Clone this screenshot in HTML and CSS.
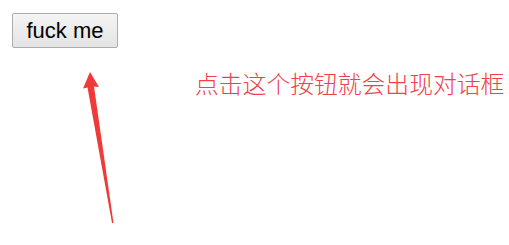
FILE: index.html
```html
<!DOCTYPE html>
<html lang="zh-CN">
<head>
<meta charset="utf-8">
<title>button</title>
<link rel="stylesheet" href="styles.css">
</head>
<body>
<div class="page">
  <button class="btn" type="button">fuck me</button>
  <p class="hint">点击这个按钮就会出现对话框</p>
</div>
<svg class="arrow" width="509" height="245" viewBox="0 0 509 245" aria-hidden="true">
  <polygon points="90,72 99,87 94,86.5 113.5,223 112,223 87.5,87.5 83,88.5" fill="#f03a3a"/>
</svg>
</body>
</html>
```
FILE: styles.css
```css
html, body {
  margin: 0;
  background: #ffffff;
}
body {
  width: 509px;
  height: 245px;
  overflow: hidden;
  position: relative;
}
.page {
  padding: 13px 0 0 12px;
}
.btn {
  display: block;
  box-sizing: border-box;
  width: 106px;
  height: 35px;
  margin: 0;
  padding: 0;
  font-family: "Liberation Sans", Arial, sans-serif;
  font-size: 22px;
  line-height: 25px;
  color: #000;
  background: linear-gradient(#f4f4f4, #e4e4e4);
  border: 1px solid #adadad;
  border-radius: 2px;
}
.hint {
  margin: 20px 0 0 183px;
  font-family: "Noto Sans CJK SC", "Noto Sans CJK JP", sans-serif;
  font-size: 23.8px;
  font-weight: 300;
  line-height: 30px;
  color: #f04048;
  white-space: nowrap;
}
.arrow {
  position: absolute;
  left: 0;
  top: 0;
  pointer-events: none;
}
```
